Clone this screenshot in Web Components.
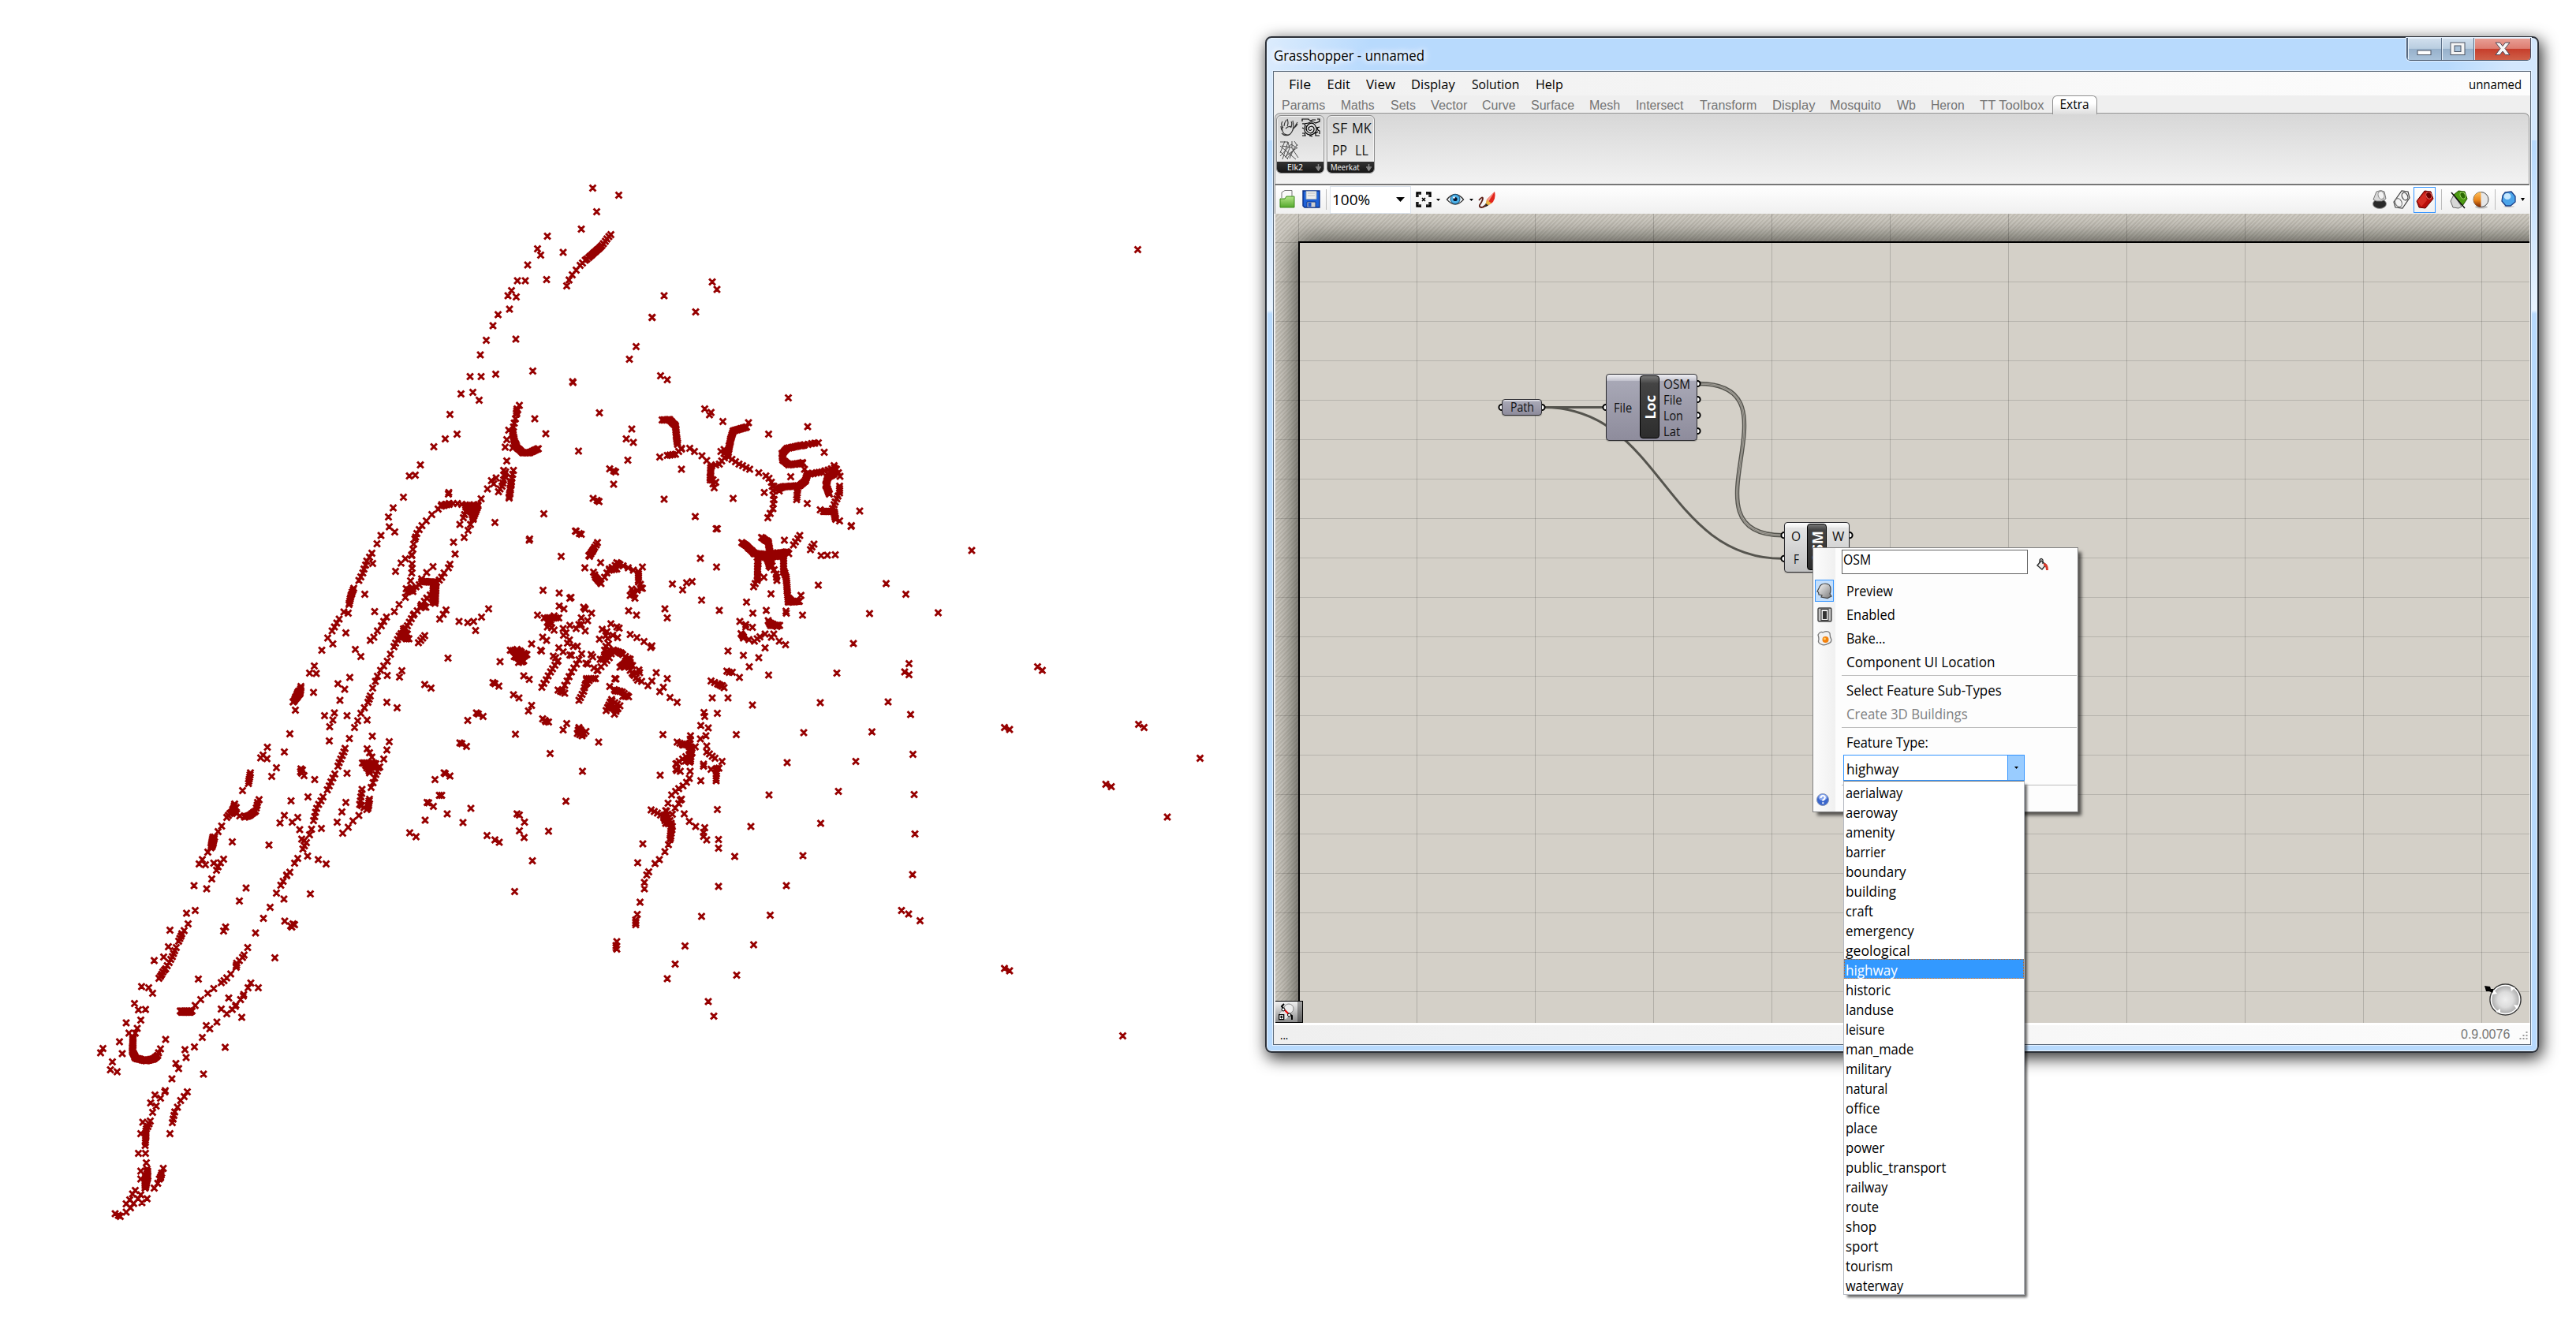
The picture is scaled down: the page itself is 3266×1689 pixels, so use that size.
<!DOCTYPE html>
<html lang="en"><head><meta charset="utf-8"><title>Grasshopper - unnamed</title>
<style>
html,body{margin:0;background:#fff}
body{position:relative;width:3266px;height:1689px;overflow:hidden;font-family:"Open Sans","Noto Sans",sans-serif;color:#000}
gh-window{position:absolute;left:1604px;top:46px}
gh-menu{position:absolute;left:2298px;top:694px}
gh-list{position:absolute;left:2337px;top:990px}
</style></head><body>
<point-cloud></point-cloud>
<gh-window>
  <gh-menubar></gh-menubar>
  <gh-tabs></gh-tabs>
  <gh-ribbon></gh-ribbon>
  <gh-toolbar></gh-toolbar>
  <gh-canvas></gh-canvas>
  <gh-status></gh-status>
</gh-window>
<gh-menu></gh-menu>
<gh-list></gh-list>
<script>
const define=(name,css,html,init)=>customElements.define(name,class extends HTMLElement{
  connectedCallback(){
    if(this.shadowRoot)return;
    const r=this.attachShadow({mode:'open'});
    r.innerHTML='<style>:host,*{box-sizing:border-box}'+css+'</style>'+(typeof html==='function'?html(this):html);
    if(init)init(this,r);
  }
});

/* Text squeezed or stretched horizontally to the width given in "w". */
define('fit-text',':host{display:inline-block;white-space:nowrap;flex:none;text-align:left}span{display:inline-block;transform-origin:0 50%}','<span><slot></slot></span>',(el,r)=>{
  const s=r.querySelector('span'),w=+el.getAttribute('w'),n=s.offsetWidth;
  el.style.width=w+'px';
  if(n)s.style.transform='scaleX('+(w/n)+')';
});

const ICONS={
folder:[20,24,'<path d="M3 10V3l4-2.5h9V12" fill="#fafafa" stroke="#777"/><path d="M1 11h6l2-3h10v14H1z" fill="url(#g)" stroke="#3c8a1c"/><defs><linearGradient id="g" x2="0" y2="1"><stop stop-color="#b5e68a"/><stop offset="1" stop-color="#53a82c"/></linearGradient></defs>'],
disk:[23,24,'<path d="M1 1h21v21H3l-2-2z" fill="#1f62d8" stroke="#0b2f86" stroke-width="1.4"/><path d="M5 1.5h13v10H5z" fill="#eee" stroke="#9ab"/><path d="M7 4h9M7 7h9" stroke="#bbb"/><path d="M6 15h11v7H6z" fill="#cfcfcf" stroke="#123a8c"/><path d="M7.500 16h4v5h-4z" fill="#1f55c8"/>'],
frame:[20,20,'<path d="M2 7V2h5M13 2h5v5M18 13v5h-5M7 18H2v-5" fill="none" stroke="#000" stroke-width="3.400"/><path d="M3 7V3h4M13 3h4v4M17 13v4h-4M7 17H3v-4" fill="none" stroke="#888" stroke-width=".6"/><path d="M8 8l4 4M12 8l-4 4" stroke="#000" stroke-width="1.500"/>'],
eye:[22,18,'<path d="M.5 9Q11-4 21.500 9 11 21 .5 9z" fill="#f4f8fb" stroke="#333" stroke-width="1.300"/><circle cx="11" cy="8.500" r="6" fill="#4db2e8" stroke="#15507c"/><circle cx="11" cy="8.500" r="2.600" fill="#06142e"/><circle cx="9.500" cy="6.500" r="1.300" fill="#fff"/>'],
pen:[23,22,'<path d="M1 12q5-6 5-2-1 4-4 8-1 3 3 3 4-1 6-5" fill="none" stroke="#5a1c14" stroke-width="1.800"/><path d="M21 1q2 9-3 14l-8 5 1-9z" fill="#e2261d"/><path d="M21 1L11 11l2 3z" fill="#f79a8c"/><path d="M11 11l-2 9 8-4z" fill="#e9b443"/><path d="M9.800 16l-1 4.500 4.200-2z" fill="#222"/>'],
c1:[20,24,'<ellipse cx="10" cy="17.500" rx="8.500" ry="6" fill="#2a2a2a" stroke="#999"/><path d="M2 12L6 2q6-3 10 0l2 9-5 3H6z" fill="#d9d9d9" stroke="#777"/><ellipse cx="12" cy="6.500" rx="3.800" ry="5" transform="rotate(-20 12 6.500)" fill="#f2f2f2" stroke="#888"/>'],
c2:[22,24,'<path d="M1 15L11 1l8 1 2 8-9 13-9-1z" fill="#f4f4f4" stroke="#444" stroke-width="1.200"/><ellipse cx="15" cy="8" rx="3.500" ry="5" transform="rotate(-25 15 8)" fill="none" stroke="#444" stroke-width="1.200"/><ellipse cx="7" cy="16" rx="4" ry="5.500" transform="rotate(-25 7 16)" fill="none" stroke="#777" stroke-width="1.200"/>'],
c3:[23,24,'<path d="M1 14L11 1l8 1 3 9-10 12-8-1z" fill="#b80e0a" stroke="#5c0000"/><path d="M2 14L11 3l3 10-7 8z" fill="#d42c22"/><ellipse cx="16.500" cy="7" rx="3.500" ry="4.500" transform="rotate(-25 16 7)" fill="#6e0000" stroke="#e56a60"/>'],
c4:[23,24,'<path d="M1 14L5 6l10 15-4 2-7-1z" fill="#d7d7d7" stroke="#666"/><path d="M5 6l6-5 8 1 3 9-6 9z" fill="#4c9a12" stroke="#235200"/><ellipse cx="16.500" cy="7" rx="3.200" ry="4.500" transform="rotate(-25 16 7)" fill="#2c6a04" stroke="#a4dc6a"/><path d="M2 3l17 20" stroke="#111" stroke-width="1.500"/>'],
ball:[21,23,'<ellipse cx="11" cy="20.500" rx="8" ry="2" fill="#0003"/><circle cx="10.500" cy="11" r="9.500" fill="#e7e7e7" stroke="#444"/><path d="M10.500 1.500a9.500 9.500 0 000 19z" fill="url(#o)"/><defs><linearGradient id="o" x2="0" y2="1"><stop stop-color="#ffc05c"/><stop offset=".55" stop-color="#e8841a"/><stop offset="1" stop-color="#7a2400"/></linearGradient></defs>'],
gem:[20,22,'<ellipse cx="10" cy="20" rx="7" ry="1.500" fill="#0002"/><path d="M5 2l8-1 5 6v7l-6 5H6l-5-6 1-7z" fill="#4ba4ea" stroke="#1b3f86" stroke-width="1.300"/><ellipse cx="8" cy="7" rx="4.500" ry="4" fill="#c6e8ff"/>'],
elk:[23,24,'<path d="M7 21Q1 17 3 10M4 12Q0 8 3 4M5 10Q5 6 8 2M3 16q-2-2-2-6M6 20q6 3 9-3l2-4 5-8M15 17q3-6 1-14M17 13q4-3 5-6M9 10q2-4 0-9M13 12q3-4 1-8M7 13q4-4 8-2M2 19q5 5 11 1" fill="none" stroke="#333" stroke-width="1.150"/>'],
topo:[24,24,'<path d="M1 4V1h8q2 3 5 1h4M20 1h3v3l-5 2q-5-3-9 0L3 7M1 7q3-1 4 2-2 5 0 9 5 5 10 2 5-3 4-8-3-8-9-5-6 4-3 9 4 5 8 1 3-5-2-7-5 1-4 4 2 3 4 0M23 11l-3 1 1 3 2 1v4M23 22h-5v-3l3-2M1 12l2 1M1 19h3l1 3H1M10 22l4 1" fill="none" stroke="#000" stroke-width="1.200"/>'],
net:[24,24,'<path d="M1 2l10 0 2 8-5 12M7 1L1 16M16 1v9l8 12M23 5L10 23M1 7l20 17M11 2l-7 22M16 9L3 7M23 9L8 20M1 14l10 10M1 20L15 5l8 5M13 23l6-14M19 1l4 6" fill="none" stroke="#444" stroke-width=".9"/>'],
paint:[16,16,'<path d="M1 9l5-6 6 5-5 6z" fill="#eee" stroke="#333" stroke-width="1.500"/><path d="M4 6V2q2-3 4 0v5" fill="none" stroke="#222" stroke-width="1.300"/><path d="M9 6q6 0 6 9h-3q0-5-3-6z" fill="#d83a2c"/>'],
head:[20,20,'<path d="M6 18l1-2-4-1-.5-3L1 11l2-4Q5 1 11 1q7 0 7 7 0 4-1 6l2 3-5 2.500z" fill="url(#h)" stroke="#444" stroke-width="1.200"/><defs><linearGradient id="h" x2="1" y2="1"><stop stop-color="#fff"/><stop offset="1" stop-color="#777"/></linearGradient></defs>'],
sw:[19,19,'<rect x="1" y="1" width="17" height="17" rx="1.500" fill="#c2c2c2" stroke="#444" stroke-width="1.400"/><rect x="5" y="2.500" width="9" height="14" fill="#eee" stroke="#333"/><path d="M7 5h5v10H7z" fill="#333"/>'],
egg:[19,19,'<path d="M1 5q3-5 6-3 7-3 9 1 0 5 2 8 0 4-4 5-5 3-9 1-5-2-3-6 0-3-1-6z" fill="#f1f1f1" stroke="#777" stroke-width="1.300"/><circle cx="10.500" cy="11" r="4" fill="#f3800c"/><circle cx="9.500" cy="10" r="1.500" fill="#ffcf66"/>']
};
define('gh-icon',':host{display:inline-block;flex:none;line-height:0}svg{display:block;overflow:visible}',el=>{
  const [w,h,c]=ICONS[el.getAttribute('name')];
  return `<svg width="${w}" height="${h}" viewBox="0 0 ${w} ${h}">${c}</svg>`;
});

/* ---- window frame ---- */
define('gh-window',`:host{display:flex;flex-direction:column;width:1615px;height:1289px;border:2px solid #2b3038;border-radius:8px;padding:0 8px 8px 8px;
 background:linear-gradient(100deg,#dcecfd 0,#b8dafd 130px,#b8dafd 1480px,#d3e7fd 1560px) 0 0/100% 130px no-repeat,linear-gradient(#b8dafd 140px,#e9f4ff 345px,#b8dafd 350px);
 box-shadow:inset 0 0 0 1px #eaf5ff,3px 6px 20px 1px rgba(0,0,0,.8)}
header{display:flex;height:42px;flex:none;justify-content:space-between;align-items:flex-start}
.t{font-size:18px;line-height:26px;margin:9px 0 0 1px;text-shadow:0 0 8px #fff,0 0 10px #fff,0 0 14px #fff}
.b{display:flex;height:29px;border:1px solid #44546a;border-top:0;border-radius:0 0 5px 5px;overflow:hidden;box-shadow:0 0 0 1px #e6f2ff}
.b div{display:grid;place-items:center;background:linear-gradient(#d2e0ee,#b9cde0 48%,#96b0ca 50%,#a9c2da);border-left:1px solid #5b6f87;box-shadow:inset 1px 1px 0 #e8f1f9}
.b .x{background:linear-gradient(#e9a197,#dd7d71 48%,#c63d2b 50%,#cf6049)}
main{display:flex;flex-direction:column;flex:1;min-height:0;border:1px solid #5a6878;background:#f0f0f0;box-shadow:0 0 0 1px #e4f1ff}`,
`<header><fit-text class="t" w="191">Grasshopper - unnamed</fit-text><div class="b">
<div style="width:43px"><svg width="20" height="8" style="margin-top:10px"><rect x="1" y="1" width="17" height="5.500" fill="#fff" stroke="#4c5564"/></svg></div>
<div style="width:41px"><svg width="20" height="18"><rect x="1" y="1" width="18" height="15.500" fill="#f5f5f5" stroke="#4c5564"/><rect x="6" y="5" width="8" height="7.500" fill="#a9c2da" stroke="#4c5564"/></svg></div>
<div class="x" style="width:72px"><svg width="20" height="18"><path d="M1 1h5.500L10 5.500 13.500 1H19l-6 7.500 6 8h-5.500L10 12l-3.500 4.500H1l6-8z" fill="#f7f7f7" stroke="#4c4554"/></svg></div>
</div></header><main><slot></slot></main>`);

define('gh-menubar',`:host{display:flex;height:30px;flex:none;font-size:16.500px;line-height:31px;padding-left:19px;padding-right:11px;background:linear-gradient(90deg,#f0f0f0,#fdfdfd)}
.r{margin-left:auto}`,
[['File',28,48.5],['Edit',29,49.5],['View',37,57],['Display',56,77],['Solution',60,81],['Help',35,40]].map(a=>`<span style="width:${a[2]}px"><fit-text w="${a[1]}">${a[0]}</fit-text></span>`).join('')+'<fit-text class="r" w="67">unnamed</fit-text>');

define('gh-tabs',`:host{display:flex;height:22px;flex:none;font:16px/25px "Liberation Sans",sans-serif;color:#747474;padding-left:10px;background:#efefef}
.c{flex:none}.a{width:57px;height:24px;margin-left:-9px;padding-left:8.500px;font-family:"Open Sans",sans-serif;font-size:15.500px;line-height:20px;color:#000;border:1px solid #909090;border-bottom:0;border-radius:6px 6px 0 0;background:linear-gradient(#fff,#fff 40%,#dcdcdc);position:relative;z-index:1}`,
[['Params',55,75],['Maths',43,63],['Sets',32,51],['Vector',46,65],['Curve',43,62],['Surface',55,74],['Mesh',39,59],['Intersect',60,81],['Transform',72,92],['Display',54,73],['Mosquito',65,85],['Wb',24,43],['Heron',43,62],['TT Toolbox',82,101]].map(a=>`<span class="c" style="width:${a[2]}px"><fit-text w="${a[1]}">${a[0]}</fit-text></span>`).join('')+'<span class="a"><fit-text w="37">Extra</fit-text></span>');

define('gh-group',`:host{display:flex;flex-direction:column;flex:none;width:61px;height:74px;border:1.500px solid #8a8a8a;border-radius:6px;overflow:hidden;background:linear-gradient(#d4d4d4,#f0f0f0);box-shadow:inset 0 0 0 1px #f4f4f4}
.g{flex:1;display:grid;grid-template-columns:28px 28px;grid-template-rows:28px 28px;padding:1px 0 0 1px;place-items:center}
footer{display:flex;height:14px;flex:none;background:linear-gradient(#333,#161616);color:#fff;font-size:10.500px;line-height:13px;align-items:center;justify-content:space-between;padding-right:2px}`,
el=>`<div class="g"><slot></slot></div><footer style="padding-left:${el.getAttribute('pad')}px"><fit-text w="${el.getAttribute('w')}">${el.getAttribute('label')}</fit-text><svg width="9" height="10"><path d="M4.500 1v8M1 5h7M2.500 6l2 3 2-3" fill="none" stroke="#888" stroke-width="1.500"/></svg></footer>`);
define('gh-ribbon',`:host{display:flex;align-items:flex-start;gap:3px;height:92px;flex:none;margin:0 1px;padding:2px 2px 2px 1px;border:1.500px solid #969696;border-bottom:2px solid #777;border-radius:7px 7px 0 0;background:linear-gradient(#d7d7d7,#f2f2f2)}
b{font:400 19px/26px "Open Sans",sans-serif;color:#111}`,
`<gh-group label="Elk2" w="20" pad="13"><gh-icon name="elk"></gh-icon><gh-icon name="topo"></gh-icon><gh-icon name="net"></gh-icon></gh-group>
<gh-group label="Meerkat" w="37" pad="4"><b><fit-text w="19">SF</fit-text></b><b><fit-text w="25">MK</fit-text></b><b><fit-text w="19">PP</fit-text></b><b><fit-text w="17">LL</fit-text></b></gh-group>`);

define('gh-toolbar',`:host{display:flex;align-items:center;height:36px;flex:none;margin:0 1px;border-left:1px solid #888;background:linear-gradient(#fff,#f0f0f0);padding-left:5px;padding-right:6px}
i{width:1px;height:26px;background:#bbb;flex:none}.cb{display:flex;align-items:center;width:103px;height:35px;flex:none;background:#fff;border:1px solid #dbe3ec;padding:0 7px 0 2px;justify-content:space-between;font-size:19px;line-height:36px;margin-left:4px}
.s{border:1.500px solid #3394ff;height:33px;width:28px;display:grid;place-items:center;margin-left:4px}svg{flex:none}`,
`<gh-icon name="folder"></gh-icon><gh-icon name="disk" style="margin-left:9px"></gh-icon><i style="margin-left:7px"></i>
<div class="cb"><fit-text w="48">100%</fit-text><svg width="11" height="6"><path d="M0 0h11L5.500 6z"/></svg></div>
<gh-icon name="frame" style="margin-left:6px"></gh-icon><svg width="5" height="3" style="margin-left:6px"><path d="M0 0h5L2.500 3z"/></svg>
<gh-icon name="eye" style="margin-left:8px"></gh-icon><svg width="5" height="3" style="margin-left:7px"><path d="M0 0h5L2.500 3z"/></svg>
<gh-icon name="pen" style="margin-left:6px"></gh-icon>
<gh-icon name="c1" style="margin-left:auto"></gh-icon><gh-icon name="c2" style="margin-left:7px"></gh-icon><span class="s"><gh-icon name="c3"></gh-icon></span><i style="margin-left:7px"></i>
<gh-icon name="c4" style="margin-left:10px"></gh-icon><gh-icon name="ball" style="margin-left:6px"></gh-icon><i style="margin-left:7px"></i><gh-icon name="gem" style="margin-left:7px"></gh-icon><svg width="5" height="4" style="margin-left:5px"><path d="M0 0h5L2.500 4z"/></svg>`);

/* ---- canvas ---- */
define('gh-node',`:host{position:absolute;display:flex;border:1.500px solid #2c2c30;border-radius:4px;font-size:15.500px;line-height:20px;color:#111;background:linear-gradient(var(--hi) 0,var(--hi2) 9%,var(--a) 10%,var(--b));box-shadow:0 1px 1px #0003}
.col{display:flex;flex-direction:column;justify-content:center;align-items:center;flex:1;gap:var(--gap,0)}
.col:first-child{flex:var(--first,1)}
.cap{width:25px;flex:none;margin:1px 0 2px;border-radius:4px;border:1.500px solid #000;background:linear-gradient(#777,#444 12%,#2d2d2d);display:flex;justify-content:center;align-items:center;overflow:hidden}
.cap b{flex:none;writing-mode:vertical-rl;transform:rotate(180deg);font:700 18px/20px "Open Sans",sans-serif;color:#fff}`,
el=>{
  const col=s=>s?'<div class="col" style="align-items:'+(s.split('|').length>3?'flex-start;padding-left:5px':'center')+'">'+s.split('|').map(t=>{const p=t.split(':');return `<fit-text w="${p[1]}">${p[0]}</fit-text>`}).join('')+'</div>':'';
  const c=el.getAttribute('cap');
  return col(el.getAttribute('in'))+(c?`<div class="cap"><b>${c}</b></div>`:'')+col(el.getAttribute('out'));
});
define('gh-canvas',`:host{display:block;position:relative;height:1026px;flex:none;margin:0 1px 0 2px;padding:35px 0 0 29px;overflow:hidden;background:repeating-linear-gradient(135deg,#d2cec6 0 2px,#c3bfb6 2px 4px)}
.page{height:1030px;margin-right:-40px;border-left:2px solid #000;border-top:2px solid #000;background:#d4d0c8;box-shadow:0 0 30px 4px rgba(50,52,45,.85)}
.grid,.w{position:absolute;inset:0}
.grid{background:linear-gradient(90deg,#0000002a 1px,transparent 1px) 29px 0/150px 100%,linear-gradient(#00000024 1px,transparent 1px) 0 36px/100% 50px}
.cool{--hi:#f0f0f4;--hi2:#c4c4cf;--a:#a8a8b6;--b:#8e8c9c}.grey{--hi:#fff;--hi2:#eee;--a:#e4e4e4;--b:#c2c2c2}
.tog{position:absolute;left:0;bottom:0;width:35px;height:28px;border:1.500px solid #000;border-left:0;background:linear-gradient(90deg,transparent 28px,#0005 28px),linear-gradient(#f2f2f2,#8c8c8c);display:grid;place-items:center start;padding-left:4px}`,
`<div class="page"></div><div class="grid"></div>
<svg class="w" width="1588" height="1026" viewBox="1617 271 1588 1026" fill="none">
<g stroke="#55544e" stroke-width="3"><path d="M1957 516.500H2034"/><path d="M1957 516.500C2107 516.500 2110 708.300 2260 708.300"/></g>
<path d="M2154 486.500C2289 486.500 2125 678.700 2260 678.700" stroke="#55544e" stroke-width="5.400"/><path d="M2154 486.500C2289 486.500 2125 678.700 2260 678.700" stroke="#aaa79f" stroke-width="2.600"/><path d="M2154 486.500C2289 486.500 2125 678.700 2260 678.700" stroke="#77756f" stroke-width=".8"/>
<g fill="#fff" stroke="#000" stroke-width="2"><circle cx="1904" cy="516.500" r="3.600"/><circle cx="1955" cy="516.500" r="3.600"/><circle cx="2036" cy="516.500" r="3.600"/><circle cx="2152" cy="486.500" r="3.600"/><circle cx="2152" cy="506.500" r="3.600"/><circle cx="2152" cy="526.500" r="3.600"/><circle cx="2152" cy="546.500" r="3.600"/><circle cx="2262" cy="678.700" r="3.600"/><circle cx="2262" cy="708.300" r="3.600"/><circle cx="2345" cy="678.700" r="3.600"/></g></svg>
<gh-node class="cool" in="Path:30" style="left:287px;top:235px;width:51px;height:21px;line-height:17px"></gh-node>
<gh-node class="cool" in="File:23.5" cap="Loc" out="OSM:34.5|File:24|Lon:25|Lat:21" style="left:419px;top:203px;width:116px;height:85px;--first:0 0 37px"></gh-node>
<gh-node class="grey" in="O:12|F:7" cap="OSM" out="W:15|&nbsp;:5" style="left:645px;top:391px;width:83px;height:64px;--gap:9px;--first:0 0 25px"></gh-node>
<div class="tog"><svg width="20" height="22" viewBox="0 0 20 22"><circle cx="13" cy="7" r="6" fill="#eee" stroke="#888"/><circle cx="7" cy="15" r="6" fill="#e5e5e5" stroke="#999"/><path d="M7 1L4 4l3 4M14 14l3 2v5" fill="none" stroke="#000" stroke-width="2"/><path d="M7 8l6 6" stroke="#e00" stroke-width="2"/><circle cx="6" cy="8" r="2" fill="#fff" stroke="#000"/><circle cx="13.500" cy="15" r="2" fill="#fff" stroke="#000"/><path d="M.7 14.700h6v6h-6zM3.700 16v3.500M2 17.700h3.500" fill="#fff" stroke="#000" stroke-width="1.300"/></svg></div>
<svg class="w" width="1588" height="1026" viewBox="1617 271 1588 1026"><defs><radialGradient id="r"><stop stop-color="#eee"/><stop offset=".5" stop-color="#dcdcdc"/><stop offset="1" stop-color="#a0a0a0"/></radialGradient></defs><circle cx="3176.500" cy="1267.500" r="19.500" fill="url(#r)" stroke="#333" stroke-width="1.500"/><circle cx="3176.500" cy="1267.500" r="18" fill="none" stroke="#fff" stroke-width="1.600"/><path d="M3160 1261l1-7 5 6zM3184 1257l-1-5 6 0zM3187 1274l7 1-3 5zM3164 1283l6-4 0 6z" fill="#fff"/><path d="M3150 1250l7 1 1 3 4 0-2 5-4-2-4 0z"/></svg>`);

define('gh-status',`:host{display:flex;flex:1;border-top:3px solid #fff;background:linear-gradient(90deg,#efefef,#fcfcfc);align-items:center;padding:0 3px 0 8px}
.v{margin-left:auto;font:16px/24px "Liberation Sans",sans-serif;color:#767676}.d{font-size:17px;line-height:20px}`,
`<fit-text class="d" w="10">...</fit-text><fit-text class="v" w="62">0.9.0076</fit-text><svg width="11" height="11" style="margin-left:12px;margin-top:3px" fill="#999"><path d="M8.500 0h2v2h-2zM8.500 4h2v2h-2zM8.500 8h2v2h-2zM4.500 4h2v2h-2zM4.500 8h2v2h-2zM.5 8h2v2h-2z"/></svg>`);

/* ---- context menu ---- */
define('gh-row',`:host{display:flex;height:30px;align-items:center;flex:none}.i{width:28px;height:28px;flex:none;display:grid;place-items:center;margin-right:14px}
:host([on]) .i{width:24px;margin:0 16px 0 2px;border:1.500px solid #3394ff;background:#c4dffc}`,
el=>`<span class="i">${el.getAttribute('icon')?`<gh-icon name="${el.getAttribute('icon')}"></gh-icon>`:''}</span><slot></slot>`);
define('gh-menu',`:host{display:flex;flex-direction:column;width:337px;height:336px;border:1px solid #808080;background:linear-gradient(90deg,#fcfcfc,#f0f0f0 28px,#fdfdfd 28px);box-shadow:5px 5px 4px -1px rgba(0,0,0,.6);font-size:18px}
.top{display:flex;height:39px;padding:2px 0 0 36px;flex:none;align-items:flex-start}.in{width:236px;height:31px;border:1.500px solid #646464;background:#fff;line-height:23px;padding-left:1px;margin-right:11px}
hr{border:0;height:1px;background:#bdbdbd;margin:2px 1px 3px 36px;flex:none}.dis{color:#808080}
.cb{display:flex;flex:none;width:230px;height:33px;margin:1px 0 5px 38px;border:1.500px solid #3394ff;background:#fff;line-height:34px;justify-content:space-between;padding-left:3px}.ar{width:21px;background:#99ccff;border-left:1px solid #3394ff;display:grid;place-items:center}
.q{display:flex;padding:10px 0 0 4px}`,
`<div class="top"><div class="in"><fit-text w="35">OSM</fit-text></div><gh-icon name="paint" style="margin-top:11px"></gh-icon></div>
<gh-row icon="head" on><fit-text w="59">Preview</fit-text></gh-row><gh-row icon="sw"><fit-text w="62">Enabled</fit-text></gh-row><gh-row icon="egg"><fit-text w="49">Bake...</fit-text></gh-row><gh-row><fit-text w="188">Component UI Location</fit-text></gh-row><hr>
<gh-row><fit-text w="197">Select Feature Sub-Types</fit-text></gh-row><gh-row class="dis"><fit-text w="154">Create 3D Buildings</fit-text></gh-row><hr>
<gh-row><fit-text w="104">Feature Type:</fit-text></gh-row><div class="cb"><fit-text w="66">highway</fit-text><span class="ar"><svg width="5" height="3"><path d="M0 0h5L2.500 3z"/></svg></span></div><hr style="margin-top:0;margin-bottom:0">
<div class="q"><svg width="16" height="16"><circle cx="8" cy="8" r="7.500" fill="#3a66cc" stroke="#8796b4"/><ellipse cx="8" cy="5" rx="5.500" ry="4" fill="#8caaf0"/><path d="M5.500 6q0-3 2.700-3t2.600 2.500Q10.700 7.200 8.300 8.500v1.300M8.300 11.300v2" fill="none" stroke="#fff" stroke-width="2"/></svg></div>`);

const ITEMS={aerialway:72,aeroway:65.5,amenity:62.5,barrier:50.5,boundary:76.5,building:64.5,craft:34.5,emergency:86.5,geological:81.5,highway:65.5,historic:57,landuse:60.5,leisure:49.5,man_made:86.5,military:57.5,natural:53.5,office:43.5,place:40.5,power:49.5,public_transport:127.5,railway:53.5,route:41.5,shop:39,sport:41.5,tourism:60.5,waterway:73.5};
define('gh-list',`:host{display:flex;flex-direction:column;width:230px;height:652px;border:1px solid #b4b8c0;border-top-color:#777;background:#fff;box-shadow:4px 4px 3px -1px rgba(0,0,0,.6);font-size:17.500px;line-height:25px}
div{height:25px;padding:2px 0 0 2px;flex:none}.on{background:#39f;color:#fff;outline:1px dotted #c4661a;outline-offset:-1px}`,
Object.entries(ITEMS).map(([k,w])=>`<div${k==='highway'?' class="on"':''}><fit-text w="${w}">${k}</fit-text></div>`).join(''));

/* ---- node survey: x marks in tiles; each tile has an origin, a scale, loose marks and dense runs ("spacing: vertices") ---- */
const TILES=[
{o:[560,200],s:[2.6133,3],p:'500,115 587,143 514,206 462,272 350,299 318,347 328,371 402,360 285,408 251,468 277,468 347,464 231,505 219,525 247,529 225,576 187,597 170,639 148,694 246,690 128,750 94,833 131,832 179,824 302,811 434,852 435,855 64,899 103,892 124,923 27,976 308,993 51,1051 12,1070 345,1050 523,970 453,1116 630,1032 612,1069 635,1083 617,1151 557,1183 576,1195 570,1191 570,1242 502,1296 522,1308 515,1303 216,1153 215,1072 211,1101 222,1037 235,1104 338,1354 176,1387 292,1450 290,1455 443,1420 462,1432 456,1430 896,473 912,501 737,525 842,586 698,607 697,608 644,718 622,766 725,829 748,844 1149,914 872,955 893,969 887,978 932,1004 1212,1023 1083,1052 1267,1120 722,1138 794,1185 737,1299 966,1296 840,1365 909,1412 914,1411 1157,1214 1069,1273 1211,1315 1385,1344 1356,1402 1357,1400 1319,1382 1320,1212 22,1279 24,1274 131,1298 180,1218 152,1260 60,1395 95,1395 87,1417 74,1444 39,1462 925,1118 1016,1008 445,1420 414,488 422,465 433,445 446,427 458,410',
l:['4:560,292 530,335','2.5:530,335 505,362 487,380 475,390','4:475,390 458,410','5:257,942 248,975 240,1010 235,1040','1.8:250,955 247,975','1.8:235,1040 240,1075 250,1103 268,1122 290,1122 320,1107','5:238,1190 232,1220 228,1260 224,1295','3:230,1240 224,1290','4:205,1190 212,1215','5:212,1195 205,1225 200,1250 188,1270','4:165,1228 172,1240','6:0,1322 25,1315 52,1316 80,1322 120,1320','3:0,1325 25,1318','2.5:80,1322 120,1325 105,1370','4:80,1345 72,1370','2.5:95,1330 105,1375','3:85,1335 110,1345','1.8:730,998 755,996 775,1020 778,1060 782,1090','8:782,1090 795,1105 822,1106 838,1117 862,1134 878,1152 895,1172','3:748,1132 775,1128','5:775,1128 795,1108','1.8:892,1170 890,1225','5:895,1225 903,1255','5:890,1215 908,1235','1.8:1010,1024 965,1040 957,1075 947,1130','4:935,1110 935,1125','5:945,1130 920,1165 895,1172','5:950,1138 985,1165 1020,1185','10:1050,1198 1074,1210 1085,1220','6:1085,1220 1100,1250 1118,1268','6:1095,1250 1101,1300 1097,1335 1080,1370','2:1118,1258 1130,1252 1185,1248','3:1180,1250 1176,1300','1.8:1185,1248 1205,1230 1212,1200','4:1212,1205 1260,1195 1302,1180','6:1195,1160 1202,1185 1212,1205','5:1248,1085 1225,1088 1190,1095','2.5:1200,1093 1145,1105 1128,1125','1.8:1128,1125 1130,1150 1150,1168 1195,1162','5:1300,1172 1315,1198 1320,1212','1.5:1300,1203 1280,1215 1273,1245 1285,1280','2.5:1318,1250 1318,1275','4:1318,1275 1300,1320 1295,1335','1.8:1265,1346 1300,1345 1305,1375','4:1254,1340 1265,1346']},
{o:[560,640],s:[2.6133,2.45],p:'1068,226 1190,282 1091,277 1010,303 1031,337 1076,328 1141,331 1142,337 1195,343 1150,152 1136,110 1257,158 1278,157 1304,156 1248,250 1473,245 1538,278 1418,338 1364,431 1309,523 1548,494 1534,519 1549,528 1254,615 1479,612 1199,708 1425,705 1554,652 1561,775 1144,801 1372,798 1315,890 1085,901 1566,900 1256,990 1025,1000 1568,1023 1197,1090 971,1093 1560,1149 1142,1183 917,1186 1524,1260 1547,1271 1088,1275 861,1279 806,1371 1033,1367 774,1427 747,1472 978,1461 883,1543 857,166 911,193 764,246 811,243 830,239 799,265 861,297 920,328 740,324 748,351 619,330 645,343 988,362 1007,372 1008,380 1029,381 1100,402 1092,412 1119,424 1140,435 1071,445 949,454 1000,468 1051,475 1019,504 987,537 1083,529 945,517 952,521 963,521 896,600 949,600 1029,622 869,645 871,658 913,648 859,686 883,693 733,714 976,714 875,718 857,728 825,718 878,750 840,752 779,826 790,828 823,828 929,798 918,818 893,822 868,806 868,812 858,858 724,840 820,850 812,862 800,873 785,882 775,890 762,901 750,927 795,915 785,928 773,942 790,918 742,950 765,962 751,1056 740,1078 721,1103 707,1115 686,1140 680,1150 672,1173 672,1193 657,1235 648,1273 580,1357 578,1370 580,1381 578,1376 804,960 820,984 842,999 871,1003 868,1018 868,1030 878,1041 917,1040 917,1067 913,947 667,1053 650,1112 396,161 474,196 527,180 665,193 640,290 45,153 28,185 22,196 8,212 0,225 336,266 389,275 425,290 428,288 390,315 405,323 470,318 475,325 497,337 473,321 462,352 483,360 318,343 425,375 455,372 403,385 445,385 475,392 463,373 404,406 424,420 412,398 14,327 5,340 58,363 86,366 106,363 132,349 155,324 112,391 334,412 348,422 298,433 328,452 331,455 193,488 21,476 417,430 437,440 450,440 388,445 402,457 425,467 430,468 370,470 378,475 386,485 464,463 495,465 500,473 525,480 478,492 484,495 505,507 518,515 550,470 540,470 560,370 580,380 588,384 532,387 548,395 567,405 583,413 523,418 550,415 543,407 553,432 543,440 540,452 653,513 662,549 684,562 696,547 711,522 625,403 647,413 670,425 693,443 696,438 748,540 734,567 723,581 757,599 780,614 573,540 578,541 557,565 272,532 290,543 170,552 176,556 190,564 238,590 256,600 298,624 288,641 115,647 122,650 137,658 86,670 335,665 345,674 354,675 342,670 414,680 402,700 244,713 520,737 359,773 466,828 411,921 354,1014 300,1106 242,1202 60,740 66,742 82,751 8,833 12,836 27,843 0,903 97,943 18,960 70,987 250,960 258,964 274,986 257,1013 273,1034 150,1028 176,1041 191,1049',
l:['2:995,117 1010,128 1035,150','2:1060,102 1082,115 1088,150','1.5:1035,152 1080,155 1145,147','2:1045,163 1115,160','2:1048,160 1046,230','4:1045,235 1033,255','1.8:1075,160 1090,195','1.8:1098,150 1085,190','5:1095,190 1108,215 1110,235','2:1133,150 1133,210','2.5:1133,200 1142,230 1148,300','1.8:1148,302 1185,300','1.8:1150,290 1158,298','5:1186,95 1166,125','5:1233,122 1222,140','2:1082,360 1090,375 1120,375','2.5:1085,365 1110,378','3:992,400 1000,410','6:1000,414 1036,424 1055,410 1072,402','5:893,548 915,557 930,562','3:915,556 935,568','4:780,738 798,744','2:798,746 812,745','5:825,718 820,752 822,800','3:828,755 825,790','5:830,770 798,790 776,805','4:808,796 825,796','5:776,822 780,805','5:878,768 905,788','3:911,820 909,858','5:694,948 715,958 735,970','3.5:735,965 742,990 760,992','4:745,952 765,1000 757,1040','3:760,1000 758,1035','2:643,1290 643,1305','3.5:516,118 490,160','2.5:500,142 488,158','3:503,210 510,225 528,245','5:540,225 555,200 585,183','3:555,203 580,200','2.5:580,180 590,186','6:585,183 635,203','2.5:652,208 652,240','5:652,235 665,260','5:660,258 625,282','4:630,262 640,290','4:340,352 388,352','3:372,345 355,365','4:350,365 372,390','3:360,365 350,380','4:227,452 255,455 282,465','3:250,450 245,470','3:240,472 262,480 280,465','3:255,490 272,485','4:260,455 268,488','6:383,488 360,520 332,567','6:455,482 430,520 400,575','3:385,576 408,585','4:495,540 475,560','5:480,545 470,580 455,608','3:480,540 510,540','4:568,452 595,460','6:570,452 555,475 540,492 515,515','4:555,450 535,480','4:590,460 618,478','1.8:590,505 610,490 632,500','1.8:600,500 625,480','1.8:605,505 625,490','4:625,515 650,545','4:632,525 656,522','4:572,575 598,582 620,597','2.500:575,578 590,580','3:600,595 618,595','4:563,605 545,640','4:565,610 590,625 572,650','3:550,630 580,634','4:455,692 450,710 465,718 478,704','3:455,695 468,710']},
{o:[200,600],s:[3,3],p:'957,10 980,8 935,91 896,132 877,166 881,204 902,223 849,237 834,268 817,344 745,438 708,528 724,532 646,627 666,649 624,673 595,733 578,761 603,762 592,834 523,901 502,991 482,1061 417,1042 401,1073 392,1083 415,1086 451,1121 433,1154 323,1208 312,1304 300,1294 386,1242 243,1342 230,1364 190,1441 170,1470 158,1487 182,1489 213,1484 250,1469 238,1482 230,1497 223,1510 205,1543 284,1402 423,1415 787,461 825,526 715,607 751,670 772,697 731,777 685,801 711,822 693,864 672,912 634,922 666,939 720,923 654,965 652,1018 545,1125 543,1135 548,1142 557,1150 550,1130 597,1166 720,1142 571,1231 507,1247 716,1253 701,1288 682,1328 481,1302 465,1331 532,1309 511,1328 540,1356 623,1351 1067,137 1043,157 1021,182 1005,200 995,215 986,230 981,243 905,373 925,342 942,325 966,313 967,345 967,362 966,380 961,410 942,473 918,499 900,526 836,600 822,624 808,636 1047,356 1023,378 1003,402 1071,406 885,688 873,716 860,733 848,750 836,772 828,792 818,818 786,892 773,913 760,942 748,968 729,1010 585,1355 578,1375 570,1457 611,1470 641,1487 532,1465 521,1483 873,770 797,939 816,1001 928,752 920,775 1016,804 1039,817 871,871 911,893 880,1022 871,1053 860,1088 845,1117 765,1302 743,1323 725,1347 704,1370 1055,1165 1071,1225 1025,1252 1030,1254 1048,1267 1017,1320 959,1368 983,1383 1072,555',
l:['6:815,305 795,335 780,380 765,408','2.5:742,445 735,465 728,500','6:690,555 663,600','1.5:545,812 540,840 515,870','1.5:535,830 518,868','2.5:353,1140 345,1180','2.5:293,1258 285,1285 275,1295','4:275,1295 262,1310','1.8:298,1272 285,1280','1.6:330,1308 350,1302 372,1285','4:372,1285 380,1252','1.5:210,1385 203,1425','1.8:216,1385 207,1420','6:978,250 970,290 966,310','3:945,440 970,450','3:950,452 968,435','4:970,440 995,425','6:870,548 850,580','1.8:1003,412 1060,415','1.8:1058,415 1055,495','2.5:1048,425 1047,490','5:1050,452 1023,475','5:1025,475 1003,500','2.5:1000,505 1020,510','5:1000,512 975,535','5:972,540 950,580 935,600','1.8:935,592 945,630','2:925,620 955,630','2:925,610 950,612','5:918,620 898,660','4:808,848 800,872','5:713,1047 685,1115','5:673,1145 645,1205','6:628,1232 605,1275 592,1322','4:548,1392 565,1405 552,1430','4:503,1518 490,1528','6:490,1532 477,1552','3.5:1016,618 992,645','5:840,1120 825,1160 812,1195','5:797,1048 815,1080','2:778,1102 830,1105','2.5:800,1105 805,1140','2:790,1112 825,1112','2:795,1120 815,1118','5:777,1203 768,1260','4:775,1265 795,1280','2.5:805,1240 800,1275','2:1080,120 1078,124']},
{o:[100,1080],s:[3,3],p:'438,129 486,141 768,128 636,138 611,188 558,286 550,301 751,157 780,180 727,211 702,254 880,160 783,264 815,275 810,286 820,278 806,282 672,309 745,403 642,365 628,393 577,465 563,480 552,490 542,498 513,521 491,538 464,562 443,585 443,223 410,234 346,299 341,362 322,401 287,414 415,275 401,300 238,513 265,517 280,538 212,577 227,602 253,600 235,640 180,651 222,672 190,690 215,690 310,750 303,765 330,714 155,723 165,768 92,748 83,765 128,800 120,829 146,837 455,484 570,557 541,599 654,499 643,517 682,517 627,543 625,549 615,562 597,583 595,588 583,600 563,617 525,648 485,661 498,674 620,630 469,706 440,742 404,753 408,783 557,744 369,805 380,825 354,864 474,846 329,909 327,914 290,925 310,938 273,956 294,968 281,992 243,1029 235,1072 252,1117 227,1148 253,1147 256,1183 235,1215 235,1245 413,913 400,932 387,946 375,972 346,1072 300,1262 287,1280 215,1288 204,1302 193,1325 180,1339 235,1305 225,1320 209,1338 196,1355 180,1371 157,1387 260,1320 240,1335 138,1377 150,1383',
l:['5:622,402 600,425','2:600,430 598,440','1.8:385,606 430,606','1.8:390,610 425,610','4:392,312 380,340','6:380,340 370,365','4:370,365 350,410','5:350,410 330,445','3:325,450 305,482','1.2:206,705 204,760 215,785 255,795 285,788 300,775','4:272,1025 262,1045','2.5:256,1055 253,1105','1.3:260,1208 262,1235 252,1280','1.5:253,1235 252,1280','5:365,990 355,1030','5:321,1205 310,1240','2.5:314,1230 306,1245']},
{o:[0,0],s:[.4801,.4801],p:'692.500,152 591.500,335 571,373 631.500,406 634.500,408 611.500,443 614.500,444 693,441 696.500,443 730.500,461.500 673,477.500 676.500,479 710.500,497.500 611.500,589.500 614.500,591 683.500,630.500 560,560.500 434.500,618.500 256,283 264,272',l:[]}
];
define('point-cloud',':host{display:block;width:1560px;height:1689px}svg{display:block}','<svg width="1560" height="1689"><path fill="none" stroke="#960000" stroke-width="2.9"/></svg>',(el,r)=>{
  let d='';
  const parse=s=>s.split(' ').map(q=>q.split(',').map(Number));
  const mark=(x,y)=>{x=Math.round(x*2)/2;y=Math.round(y*2)/2;d+=`M${x-3.9} ${y-4}l7.800 8m0-8l-7.800 8`};
  for(const t of TILES){
    const m=([x,y])=>[t.o[0]+x/t.s[0],t.o[1]+y/t.s[1]];
    parse(t.p).map(m).forEach(q=>mark(...q));
    for(const l of t.l){
      const [st,v]=l.split(':'),pts=parse(v).map(m);
      for(let i=0;i<pts.length-1;i++){
        const [a,b]=[pts[i],pts[i+1]],n=Math.max(1,Math.round(Math.hypot(b[0]-a[0],b[1]-a[1])/st));
        for(let k=0;k<=n;k++)mark(a[0]+(b[0]-a[0])*k/n,a[1]+(b[1]-a[1])*k/n);
      }
    }
  }
  r.querySelector('path').setAttribute('d',d);
});
</script>
</body></html>
